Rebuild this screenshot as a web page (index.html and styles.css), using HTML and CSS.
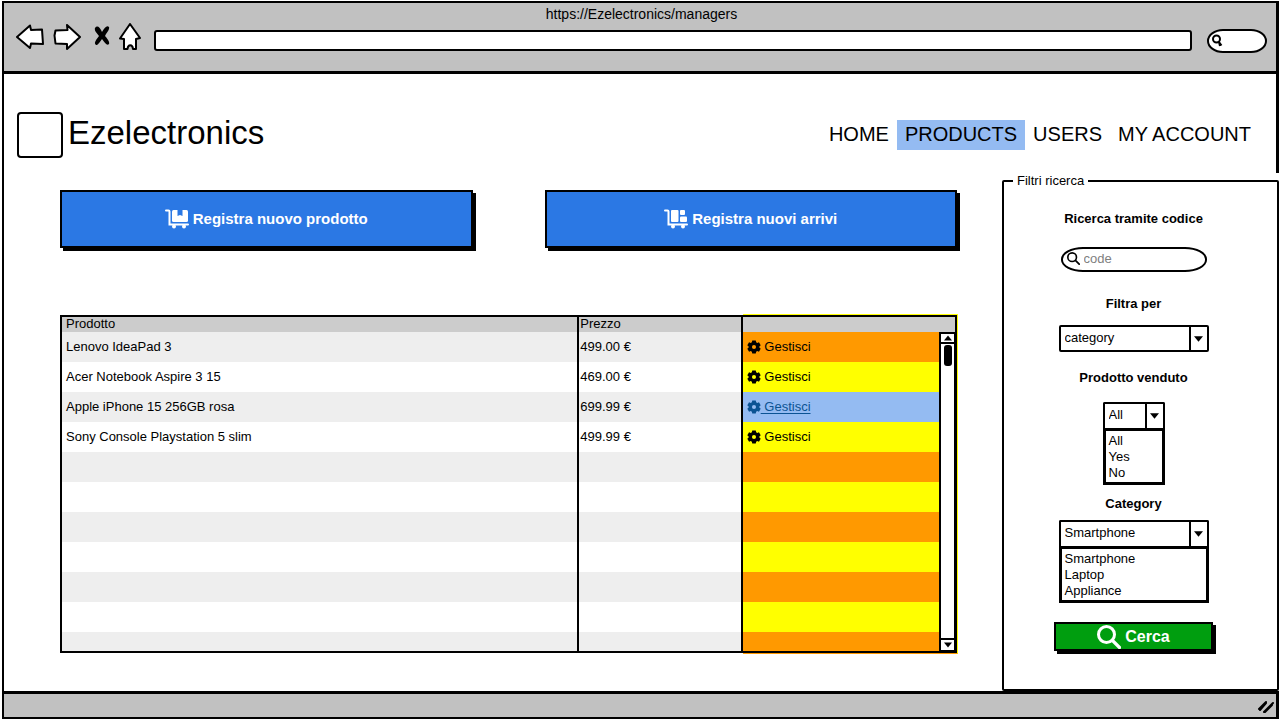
FILE: index.html
```html
<!DOCTYPE html>
<html lang="it">
<head>
<meta charset="utf-8">
<meta name="viewport" content="width=device-width, initial-scale=1">
<title>Ezelectronics</title>
<link rel="stylesheet" href="styles.css">
</head>
<body>
<svg class="defs" aria-hidden="true">
  <symbol id="gear" viewBox="0 0 24 24"><path fill-rule="evenodd" d="M9 1h6l.7 3 1.800 1 3-1 3 5-2.300 2v2l2.300 2-3 5-3-1-1.800 1-.7 3H9l-.7-3-1.800-1-3 1-3-5 2.300-2v-2L.5 9l3-5 3 1 1.800-1zM12 8.500a3.500 3.500 0 1 0 0 7 3.500 3.500 0 0 0 0-7z"/></symbol>
  <symbol id="down" viewBox="0 0 10 6"><path d="M0 0h10L5 6z"/></symbol>
  <symbol id="lens" viewBox="0 0 24 24"><circle cx="9.500" cy="9.500" r="8" fill="none" stroke="currentColor" stroke-width="3"/><path d="M15.500 15.500l7 7" stroke="currentColor" stroke-width="3.200" stroke-linecap="round"/></symbol>
</svg>
<div class="browser">
  <header class="toolbar">
    <div class="page-url">https://Ezelectronics/managers</div>
    <div class="tools">
      <button class="tool back" aria-label="Indietro"><svg width="28" height="26" viewBox="0 0 28 26"><path d="M1 13L14 1.500l1 4.500 11-.5 1 14.500-12-.5-1 4.500z"/></svg></button>
      <button class="tool forward" aria-label="Avanti"><svg width="28" height="26" viewBox="0 0 28 26"><path d="M27 13L14 1l.5 5-12 .5-1 5 1 8L14 20v5z"/></svg></button>
      <button class="tool stop" aria-label="Interrompi"><svg width="18" height="20" viewBox="0 0 16 20"><path d="M1 2c2-3 5-1 7 4 3-5 5-7 7-5 1 3-3 6-4 9 2 2 5 6 4 8-2 2-4-1-7-5-3 4-4 6-6 6-3-2 1-6 3-9C3 7 0 5 1 2z"/></svg></button>
      <button class="tool home" aria-label="Pagina iniziale"><svg width="22" height="28" viewBox="0 0 22 28"><path d="M11 1l10 14-4 1v10h-3c-.5-5-5-5-5.500 0H5V16l-4-.5z"/></svg></button>
      <input class="address" type="text" aria-label="Indirizzo">
      <label class="quick"><svg width="12" height="14" viewBox="0 0 12 14"><circle cx="5.500" cy="5" r="3.500"/><path d="M8 8l2.500 3.500M8 8l1 4"/></svg><input type="search" aria-label="Cerca nel web"></label>
    </div>
  </header>

  <main class="page">
    <div class="masthead">
      <div class="brand"><span class="logo"></span><h1>Ezelectronics</h1></div>
      <nav class="menu">
        <a href="#">HOME</a>
        <a href="#" class="current">PRODUCTS</a>
        <a href="#">USERS</a>
        <a href="#">MY ACCOUNT</a>
      </nav>
    </div>

    <div class="columns">
      <section class="catalog">
        <div class="actions">
          <button class="action"><svg class="cart" viewBox="0 0 24 20"><path class="rail" d="M1 1.500h2.500q1 0 1 1V15.500H23"/><circle cx="9" cy="17.500" r="2"/><circle cx="19" cy="17.500" r="2"/><rect x="7" y="1" width="16" height="12" rx="1.500"/><path class="gap" d="M12.500 0v7l2.500-1 2.500 1V0z"/></svg>Registra nuovo prodotto</button>
          <button class="action"><svg class="cart" viewBox="0 0 24 20"><path class="rail" d="M1 1.500h2.500q1 0 1 1V15.500H23"/><circle cx="9" cy="17.500" r="2"/><circle cx="19" cy="17.500" r="2"/><rect x="7" y="1" width="7.500" height="12" rx="1"/><rect x="16" y="1" width="5" height="5" rx="1"/><rect x="16" y="7.500" width="7" height="5.500" rx="1"/></svg>Registra nuovi arrivi</button>
        </div>

        <div class="grid-box">
          <table class="products">
            <colgroup><col class="c-name"><col class="c-price"><col class="c-manage"></colgroup>
            <thead><tr><th>Prodotto</th><th>Prezzo</th><th aria-label="Azioni"></th></tr></thead>
            <tbody>
              <tr><td>Lenovo IdeaPad 3</td><td>499.00 €</td><td><a href="#"><svg class="gear"><use href="#gear"/></svg> Gestisci</a></td></tr>
              <tr><td>Acer Notebook Aspire 3 15</td><td>469.00 €</td><td><a href="#"><svg class="gear"><use href="#gear"/></svg> Gestisci</a></td></tr>
              <tr><td>Apple iPhone 15 256GB rosa</td><td>699.99 €</td><td class="selected"><a href="#"><svg class="gear"><use href="#gear"/></svg> Gestisci</a></td></tr>
              <tr><td>Sony Console Playstation 5 slim</td><td>499.99 €</td><td><a href="#"><svg class="gear"><use href="#gear"/></svg> Gestisci</a></td></tr>
              <tr><td></td><td></td><td></td></tr>
              <tr><td></td><td></td><td></td></tr>
              <tr><td></td><td></td><td></td></tr>
              <tr><td></td><td></td><td></td></tr>
              <tr><td></td><td></td><td></td></tr>
              <tr><td></td><td></td><td></td></tr>
              <tr class="last"><td></td><td></td><td></td></tr>
            </tbody>
          </table>
          <div class="scrollbar">
            <button class="up" aria-label="Su"><svg viewBox="0 0 10 6"><path d="M0 6h10L5 0z"/></svg></button>
            <span class="thumb"></span>
            <button class="dn" aria-label="Giù"><svg><use href="#down"/></svg></button>
          </div>
        </div>
      </section>

      <aside class="side">
        <fieldset class="filters">
          <legend>Filtri ricerca</legend>
          <label class="caption" for="code">Ricerca tramite codice</label>
          <div class="code"><svg><use href="#lens"/></svg><input id="code" type="search" placeholder="code"></div>

          <label class="caption" for="by">Filtra per</label>
          <div class="combo wide"><select id="by"><option>category</option></select><span class="arrow"><svg><use href="#down"/></svg></span></div>

          <label class="caption" for="sold">Prodotto venduto</label>
          <div class="open narrow">
            <div class="combo"><select id="sold"><option>All</option></select><span class="arrow"><svg><use href="#down"/></svg></span></div>
            <select class="list" size="3" aria-label="Prodotto venduto"><option>All</option><option>Yes</option><option>No</option></select>
          </div>

          <label class="caption" for="cat">Category</label>
          <div class="open wide">
            <div class="combo"><select id="cat"><option>Smartphone</option></select><span class="arrow"><svg><use href="#down"/></svg></span></div>
            <select class="list" size="3" aria-label="Category"><option>Smartphone</option><option>Laptop</option><option>Appliance</option></select>
          </div>

          <button class="submit"><svg><use href="#lens"/></svg>Cerca</button>
        </fieldset>
      </aside>
    </div>
  </main>

  <footer class="status"><svg width="18" height="14" viewBox="0 0 18 14"><path d="M2 9l7-7M3 10l6-7M7 12l9-9M8 12l7-7"/></svg></footer>
</div>
</body>
</html>
```
FILE: styles.css
```css
* { box-sizing: border-box; }

body {
  margin: 0;
  padding: 1px 1px 1px 2px;
  background: #fff;
  color: #000;
  font: 13px/16px "Liberation Sans", Arial, sans-serif;
}

button, input, select { font: inherit; color: inherit; }
button { cursor: pointer; }
input, select { min-width: 0; outline: 0; }
a { color: inherit; text-decoration: none; }
.defs { position: absolute; width: 0; height: 0; }

.browser {
  display: flex;
  flex-direction: column;
  min-height: calc(100vh - 2px);
  border: 2px solid #000;
  border-right-width: 3px;
}

/* Browser chrome */
.toolbar {
  padding: 3px 9px 16px 12px;
  background: #c1c1c1;
  border-bottom: 3px solid #000;
}
.page-url { font-size: 14px; text-align: center; }
.tools { display: flex; align-items: center; height: 33px; }
.tool {
  display: flex;
  padding: 0;
  border: 0;
  background: none;
}
.tool svg { fill: #fff; stroke: #000; stroke-width: 2; stroke-linejoin: round; }
.tool.stop svg { fill: #000; stroke: none; }
.back, .forward, .home { margin-bottom: 3px; }
.forward { margin-right: 12px; margin-left: 9px; }
.stop { margin-bottom: 5px; }
.home { margin-right: 13px; margin-left: 8px; }
.address {
  flex: 1;
  height: 21px;
  margin-top: 4px;
  padding: 0 6px;
  border: 2px solid #000;
  border-radius: 3px;
  background: #fff;
}
.quick {
  display: flex;
  align-items: center;
  width: 60px;
  height: 24px;
  margin-top: 4px;
  margin-left: 15px;
  padding-left: 2px;
  border: 2px solid #000;
  border-radius: 16px / 12px;
  background: #fff;
}
.quick svg { flex: none; fill: none; stroke: #000; stroke-width: 2; }
.quick input { width: 100%; border: 0; padding: 0; background: none; }

/* Page */
.page { flex: 1; display: flex; flex-direction: column; }
.masthead {
  display: flex;
  align-items: center;
  justify-content: space-between;
  padding: 38px 17px 15px 13px;
}
.brand { display: flex; align-items: center; gap: 5px; }
.logo { width: 46px; height: 46px; border: 2px solid #000; border-radius: 4px; }
h1 { margin: 0 0 4px; font-size: 33px; line-height: 40px; font-weight: 400; }
.menu { display: flex; }
.menu a { padding: 0 8px 2px; font-size: 20px; line-height: 28px; }
.menu .current { background: #94bbf2; }

.columns { flex: 1; display: flex; }
.catalog { flex: 1; padding: 17px 45px 36px 56px; }

.actions { display: grid; grid-template-columns: 1fr 1fr; gap: 72px; }
.action, .submit {
  display: flex;
  align-items: center;
  justify-content: center;
  border: 2px solid #000;
  box-shadow: 3px 3px #000;
  color: #fff;
  font-weight: 700;
  line-height: 20px;
}
.action { gap: 4px; height: 58px; background: #2b78e4; font-size: 15px; }
.cart { width: 24px; height: 20px; fill: #fff; }
.cart .rail { fill: none; stroke: #fff; stroke-width: 2; stroke-linecap: round; }
.cart .gap { fill: #2b78e4; }

.grid-box {
  position: relative;
  margin-top: 67px;
  border: 2px solid #000;
}
.grid-box::after {
  content: "";
  position: absolute;
  inset: -3px -3px -3px auto;
  width: 24%;
  border: solid #ff0;
  border-width: 1px 1px 1px 0;
  border-bottom-color: #ff9900;
  pointer-events: none;
}
.products { width: 100%; border-collapse: separate; border-spacing: 0; table-layout: fixed; }
.c-name { width: 57.7%; }
.c-price { width: 18.3%; }
.c-manage { width: 24%; }
th, td { padding: 0 1px; text-align: left; font-weight: 400; border-left: 2px solid #000; }
th:first-child, td:first-child { padding-left: 4px; border-left: 0; }
th { height: 15px; padding-bottom: 2px; line-height: 13px; background: #ccc; }
td { height: 30px; padding-bottom: 1px; }
td:last-child { padding-left: 4px; background: #ff0; }
tr:nth-child(odd) td { background: #eee; }
tr:nth-child(odd) th { background: #ccc; }
tr:nth-child(odd) td:last-child { background: #ff9900; }
tr .selected.selected { background: #94bbf2 !important; color: #0b5394; }
.selected a { text-decoration: underline; text-underline-offset: 2px; }
.last td { height: 19px; padding-bottom: 0; }
.gear { width: 14px; height: 14px; fill: currentColor; vertical-align: -3px; }

.scrollbar {
  position: absolute;
  top: 15px;
  right: 0;
  bottom: 0;
  display: flex;
  flex-direction: column;
  align-items: center;
  width: 16px;
  border: 2px solid #000;
  border-right-width: 1px;
  border-bottom-width: 1px;
  background: #fff;
}
.scrollbar button {
  display: flex;
  align-items: center;
  justify-content: center;
  width: 100%;
  height: 10px;
  padding: 0;
  border: 0;
  background: #fff;
}
.scrollbar svg { width: 8px; height: 6px; }
.scrollbar .up { border-bottom: 2px solid #000; }
.scrollbar .dn { height: 12px; margin-top: auto; border-top: 2px solid #000; }
.thumb { width: 8px; height: 21px; margin-top: 1px; border-radius: 3px; background: #000; }

/* Filters */
.side { position: relative; width: 277px; margin: 0 -3px 0 0; background: #fff; }
.filters {
  display: flex;
  flex-direction: column;
  align-items: center;
  height: 100%;
  min-width: 0;
  margin: 0;
  padding: 22px 14px 36px 0;
  border: 2px solid #000;
  border-radius: 2px;
}
legend { margin-left: 9px; padding: 0 4px; }
.caption { font-weight: 700; }
.code {
  display: flex;
  align-items: center;
  gap: 4px;
  width: 146px;
  height: 25px;
  margin: 20px 0 24px;
  padding: 0 4px 2px;
  border: 2px solid #000;
  border-radius: 22px / 12px;
}
.code svg { flex: none; width: 13px; height: 13px; }
.code input { width: 100%; padding: 0; border: 0; background: none; }
.code input::placeholder { color: #808080; opacity: 1; }

.wide { width: 150px; }
.narrow { width: 62px; }
.combo { display: flex; height: 27px; border: 2px solid #000; border-radius: 2px; }
.combo select {
  flex: 1;
  appearance: none;
  padding: 0 0 2px 4px;
  border: 0;
  background: #fff;
}
.arrow { display: flex; align-items: center; justify-content: center; width: 18px; border-left: 2px solid #000; }
.arrow svg { width: 9px; height: 6px; }
.filters > .combo { margin: 13px 0 18px; }
.open { display: flex; flex-direction: column; margin: 16px 0 11px; }
.open .combo { height: 26px; border-bottom: 0; border-radius: 2px 2px 0 0; }
.list {
  appearance: none;
  height: 57px;
  padding: 2px 3px 0;
  border: 3px solid #000;
  border-radius: 0;
  overflow: hidden;
  background: #fff;
}
.list option { min-height: 16px; padding: 0; line-height: 16px; }
.open.wide { margin: 8px 0 19px; }
.submit { gap: 4px; width: 159px; height: 29px; padding: 0; background: #009e0f; font-size: 16px; }
.submit svg { width: 24px; height: 24px; }

.status {
  display: flex;
  align-items: center;
  justify-content: flex-end;
  height: 26px;
  padding: 3px 1px 0 0;
  border-top: 3px solid #000;
  background: #c1c1c1;
}
.status path { fill: none; stroke: #000; stroke-width: 2; stroke-linecap: round; }
```
